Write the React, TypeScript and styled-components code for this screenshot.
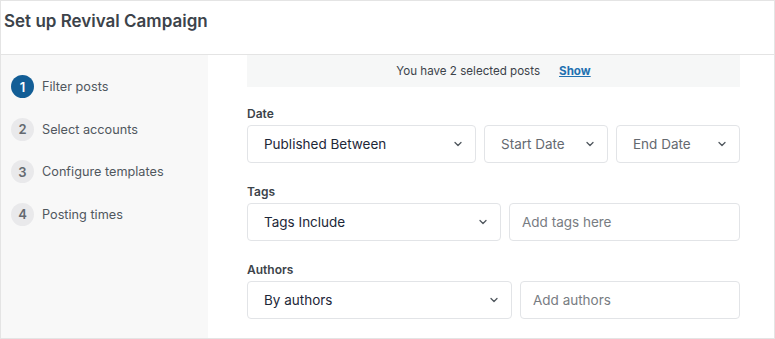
import { FC } from 'react';
import styled, { createGlobalStyle } from 'styled-components';

const GlobalStyle = createGlobalStyle`
  html, body {
    margin: 0;
    padding: 0;
    background: #fff;
  }
  body {
    font-family: Inter, 'Noto Sans', sans-serif;
  }
`;

const steps = ['Filter posts', 'Select accounts', 'Configure templates', 'Posting times'];

const Chevron: FC = () => (
  <svg width='12' height='12' viewBox='0 0 12 12' fill='none'>
    <path d='M3 4.5 6 7.5 9 4.5' stroke='#50575e' strokeWidth='1.3' strokeLinecap='round' strokeLinejoin='round' />
  </svg>
);

type SelectProps = { label: string; placeholder?: boolean; width?: number };

const Select: FC<SelectProps> = ({ label, placeholder, width }) => (
  <SelectBox width={width}>
    <Value placeholder={placeholder}>{label}</Value>
    <Chevron />
  </SelectBox>
);

export default function App() {
  return (
    <>
      <GlobalStyle />
      <Frame>
        <Header>
          <Title>Set up Revival Campaign</Title>
        </Header>
        <Body>
          <Sidebar>
            {steps.map((s, i) => (
              <Step key={s}>
                <StepNum active={i === 0}>{i + 1}</StepNum>
                <StepLabel>{s}</StepLabel>
              </Step>
            ))}
          </Sidebar>
          <Main>
            <Notice>
              You have 2 selected posts <ShowLink href='#'>Show</ShowLink>
            </Notice>
            <Field>
              <Label>Date</Label>
              <Row>
                <Select label='Published Between' width={229} />
                <Select label='Start Date' placeholder width={124} />
                <Select label='End Date' placeholder />
              </Row>
            </Field>
            <Field>
              <Label>Tags</Label>
              <Row>
                <Select label='Tags Include' width={254} />
                <Input placeholder='Add tags here' />
              </Row>
            </Field>
            <Field>
              <Label>Authors</Label>
              <Row>
                <Select label='By authors' width={265} />
                <Input placeholder='Add authors' />
              </Row>
            </Field>
          </Main>
        </Body>
      </Frame>
    </>
  );
}

const Frame = styled.div`
  width: 775px;
  height: 339px;
  box-sizing: border-box;
  border: 1px solid #e4e4e4;
  display: flex;
  flex-direction: column;
  overflow: hidden;
`;

const Header = styled.div`
  height: 54px;
  flex-shrink: 0;
  border-bottom: 1px solid #e4e4e4;
  display: flex;
  align-items: flex-start;
  padding: 10px 0 0 3px;
  box-sizing: border-box;
`;

const Title = styled.h1`
  margin: 0;
  font-size: 17px;
  font-weight: 600;
  color: #3c434a;
`;

const Body = styled.div`
  flex: 1;
  display: flex;
  min-height: 0;
`;

const Sidebar = styled.div`
  width: 207px;
  flex-shrink: 0;
  background: #f8f8f8;
  padding: 20px 0 0 10px;
  box-sizing: border-box;
  display: flex;
  flex-direction: column;
  gap: 19.5px;
`;

const Step = styled.div`
  display: flex;
  align-items: center;
  gap: 8px;
  height: 23px;
`;

const StepNum = styled.span<{ active?: boolean }>`
  width: 23px;
  height: 23px;
  border-radius: 50%;
  display: flex;
  align-items: center;
  justify-content: center;
  font-size: 13px;
  font-weight: 600;
  background: ${(p) => (p.active ? '#135e96' : '#e9e9eb')};
  color: ${(p) => (p.active ? '#fff' : '#646970')};
`;

const StepLabel = styled.span`
  font-size: 12.7px;
  color: #50575e;
`;

const Main = styled.div`
  flex: 1;
  min-width: 0;
  padding: 0 34px 0 39px;
  display: flex;
  flex-direction: column;
`;

const Notice = styled.div`
  height: 32px;
  flex-shrink: 0;
  background: #f6f7f7;
  display: flex;
  align-items: center;
  justify-content: center;
  gap: 19px;
  font-size: 11.6px;
  color: #3c434a;
  margin-bottom: 19px;
`;

const ShowLink = styled.a`
  color: #2271b1;
  font-weight: 700;
  text-decoration: underline;
`;

const Field = styled.div`
  display: flex;
  flex-direction: column;
  gap: 4px;
  margin-bottom: 21px;
`;

const Label = styled.div`
  font-size: 12px;
  font-weight: 600;
  color: #3c434a;
  line-height: 15px;
`;

const Row = styled.div`
  display: flex;
  gap: 8px;
`;

const SelectBox = styled.div<{ width?: number }>`
  height: 38px;
  box-sizing: border-box;
  border: 1px solid #e2e4e7;
  border-radius: 4px;
  display: flex;
  align-items: center;
  justify-content: space-between;
  padding: 0 11px 0 16px;
  ${(p) => (p.width ? `width: ${p.width}px; flex-shrink: 0;` : 'flex: 1; min-width: 0;')}
`;

const Value = styled.span<{ placeholder?: boolean }>`
  font-size: 13.5px;
  color: ${(p) => (p.placeholder ? '#646970' : '#1d2738')};
`;

const Input = styled.input`
  flex: 1;
  min-width: 0;
  height: 38px;
  box-sizing: border-box;
  border: 1px solid #e2e4e7;
  border-radius: 4px;
  padding: 0 12px;
  font-family: Inter, sans-serif;
  font-size: 13.5px;
  color: #1d2738;
  outline: none;
  &::placeholder {
    color: #787c82;
  }
`;
